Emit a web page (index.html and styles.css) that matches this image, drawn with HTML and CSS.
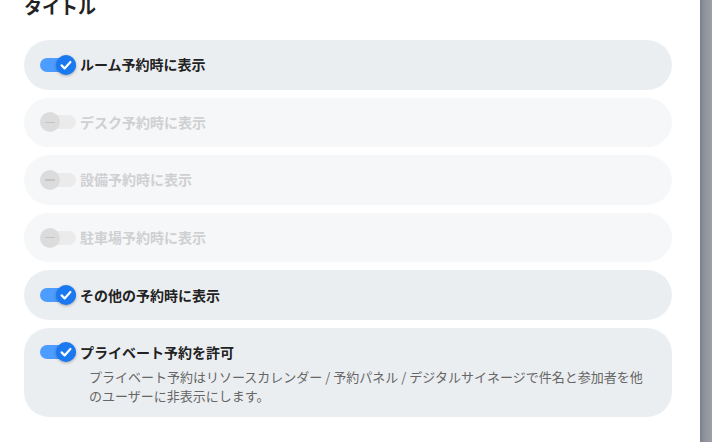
FILE: index.html
```html
<!DOCTYPE html>
<html lang="ja">
<head>
<meta charset="utf-8">
<link rel="stylesheet" href="styles.css">
</head>
<body>
<div class="page">
  <main class="panel">
    <h2 class="title">タイトル</h2>
    <div class="list">
      <div class="row on">
        <span class="toggle on"><span class="track"></span><span class="thumb"><svg viewBox="0 0 20 20" width="20" height="20"><path d="M5.6 10.4l3 3 5.8-6.4" fill="none" stroke="#fff" stroke-width="2.2" stroke-linecap="round" stroke-linejoin="round"/></svg></span></span>
        <span class="label">ルーム予約時に表示</span>
      </div>
      <div class="row off">
        <span class="toggle off"><span class="track"></span><span class="thumb"><span class="dash"></span></span></span>
        <span class="label">デスク予約時に表示</span>
      </div>
      <div class="row off">
        <span class="toggle off"><span class="track"></span><span class="thumb"><span class="dash"></span></span></span>
        <span class="label">設備予約時に表示</span>
      </div>
      <div class="row off">
        <span class="toggle off"><span class="track"></span><span class="thumb"><span class="dash"></span></span></span>
        <span class="label">駐車場予約時に表示</span>
      </div>
      <div class="row on">
        <span class="toggle on"><span class="track"></span><span class="thumb"><svg viewBox="0 0 20 20" width="20" height="20"><path d="M5.6 10.4l3 3 5.8-6.4" fill="none" stroke="#fff" stroke-width="2.2" stroke-linecap="round" stroke-linejoin="round"/></svg></span></span>
        <span class="label">その他の予約時に表示</span>
      </div>
      <div class="row on tall">
        <div class="head">
          <span class="toggle on"><span class="track"></span><span class="thumb"><svg viewBox="0 0 20 20" width="20" height="20"><path d="M5.6 10.4l3 3 5.8-6.4" fill="none" stroke="#fff" stroke-width="2.2" stroke-linecap="round" stroke-linejoin="round"/></svg></span></span>
          <span class="label">プライベート予約を許可</span>
        </div>
        <p class="desc">プライベート予約はリソースカレンダー&nbsp;/&nbsp;予約パネル&nbsp;/&nbsp;デジタルサイネージで件名と参加者を他のユーザーに非表示にします。</p>
      </div>
    </div>
  </main>
  <div class="edge"></div>
</div>
</body>
</html>
```

FILE: styles.css
```css
html, body {
  margin: 0;
  padding: 0;
  height: 100%;
  overflow: hidden;
}
body {
  font-family: "Noto Sans CJK JP", "Noto Sans", sans-serif;
  background: #ffffff;
  color: #222;
}
.page {
  display: flex;
  height: 442px;
  width: 712px;
}
.panel {
  width: 700px;
  flex: none;
  background: #fff;
  padding: 0 28px 0 24px;
  box-sizing: border-box;
}
.edge {
  width: 12px;
  flex: none;
  background: linear-gradient(to right, #7b808a 0%, #8f949d 40%, #9ba0a8 100%);
}
.title {
  margin: -6px 0 0 0;
  font-size: 18px;
  line-height: 24px;
  font-weight: 700;
  color: #222;
}
.list {
  margin-top: 22px;
  display: flex;
  flex-direction: column;
  gap: 8px;
  width: 648px;
}
.row {
  display: flex;
  align-items: center;
  height: 49.6px;
  box-sizing: border-box;
  padding: 0 20px 0 16px;
  border-radius: 25px;
  background: #ebeef1;
}
.row.off {
  background: #f6f7f8;
}
.row.tall {
  height: 89px;
  flex-direction: column;
  align-items: flex-start;
  justify-content: flex-start;
  padding-top: 14px;
}
.head {
  display: flex;
  align-items: center;
  height: 21px;
}
.toggle {
  position: relative;
  width: 36px;
  height: 20px;
  flex: none;
  margin-right: 4px;
}
.track {
  position: absolute;
  left: 0;
  top: 3px;
  width: 36px;
  height: 14px;
  border-radius: 7px;
  background: #4d9cff;
}
.thumb {
  position: absolute;
  top: 0;
  width: 20px;
  height: 20px;
  border-radius: 50%;
  display: flex;
  align-items: center;
  justify-content: center;
}
.toggle.on .thumb {
  left: 16px;
  background: #1a79f0;
  box-shadow: 0 1px 3px rgba(0, 0, 0, 0.3);
}
.toggle.off .track {
  background: #ebebeb;
}
.toggle.off .thumb {
  left: 0;
  background: #dcdcdc;
}
.dash {
  width: 10px;
  height: 1.5px;
  background: #c4c4c4;
}
.label {
  font-size: 14px;
  font-weight: 700;
  line-height: 21px;
  color: #222;
}
.row.off .label {
  color: #cfd0d2;
}
.desc {
  margin: 4px 0 0 49px;
  font-size: 13px;
  line-height: 19.5px;
  color: #666;
  max-width: 560px;
}
```
